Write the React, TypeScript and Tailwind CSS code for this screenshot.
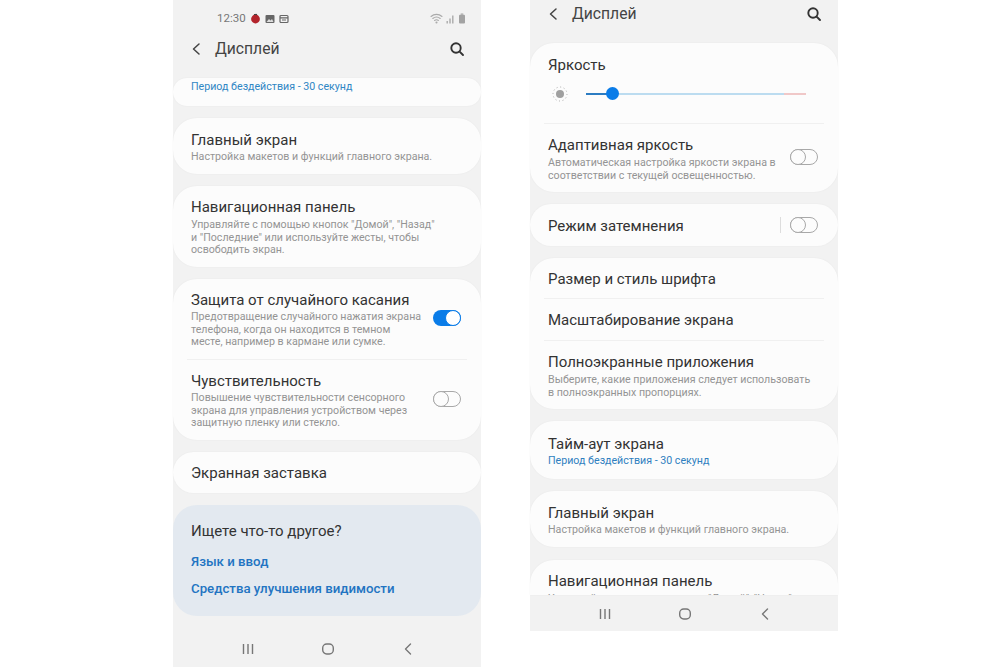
import React from "react";

const Font = { fontFamily: '"Roboto", "Noto Sans", sans-serif' };

function Toggle({ on = false }: { on?: boolean }) {
  return on ? (
    <div className="relative h-[16px] w-[28px] shrink-0 rounded-full bg-[#0a7ce8]">
      <div className="absolute right-0 top-0 h-[16px] w-[16px] rounded-full border-[1.5px] border-[#0a7ce8] bg-white" />
    </div>
  ) : (
    <div className="relative h-[16px] w-[28px] shrink-0 rounded-full border border-[#a8a8a8] bg-[#fcfcfc]">
      <div className="absolute left-[-1px] top-[-1px] h-[16px] w-[16px] rounded-full border border-[#a8a8a8] bg-[#fcfcfc]" />
    </div>
  );
}

function Card({ children, className = "" }: { children: React.ReactNode; className?: string }) {
  return <div className={`shrink-0 overflow-hidden rounded-[24px] bg-[#fcfcfc] shadow-[0_0_2px_rgba(0,0,0,0.05)] ${className}`}>{children}</div>;
}

function Title({ children }: { children: React.ReactNode }) {
  return <div className="pt-[1px] text-[15px] leading-[20px] text-[#333333]">{children}</div>;
}

function Sub({ children, className = "" }: { children: React.ReactNode; className?: string }) {
  return <div className={`mt-[1px] text-[10.65px] leading-[12.5px] text-[#949494] ${className}`}>{children}</div>;
}

function Divider() {
  return <div className="mx-[14px] h-px bg-[#f0f0f0]" />;
}

function Back({ size = 16 }: { size?: number }) {
  return (
    <svg width={size} height={size} viewBox="0 0 16 16" fill="none" stroke="#444" strokeWidth="1.5" strokeLinecap="round" strokeLinejoin="round">
      <path d="M11 3 5.5 8l5.5 5" />
    </svg>
  );
}

function Search() {
  return (
    <svg width="16" height="16" viewBox="0 0 16 16" fill="none" stroke="#333" strokeWidth="1.9" strokeLinecap="round">
      <circle cx="7" cy="7" r="4.7" />
      <path d="m10.6 10.6 3.4 3.4" />
    </svg>
  );
}

function Header({ className = "" }: { className?: string }) {
  return (
    <div className={`flex items-center justify-between pl-[15px] pr-[16px] ${className}`}>
      <div className="flex items-center gap-[11px]">
        <Back />
        <span className="text-[15.7px] leading-[20px] text-[#444444]">Дисплей</span>
      </div>
      <Search />
    </div>
  );
}

function NavBar({ className = "" }: { className?: string }) {
  return (
    <div className={`flex items-center justify-between pl-[68px] pr-[66px] ${className}`}>
      <svg width="14" height="14" viewBox="0 0 14 14" fill="none" stroke="#777" strokeWidth="1.4">
        <path d="M2.5 2v10M7 2v10M11.5 2v10" />
      </svg>
      <svg width="14" height="14" viewBox="0 0 14 14" fill="none" stroke="#777" strokeWidth="1.4">
        <rect x="1.7" y="2" width="10.6" height="10" rx="4" />
      </svg>
      <svg width="14" height="14" viewBox="0 0 14 14" fill="none" stroke="#777" strokeWidth="1.4" strokeLinecap="round" strokeLinejoin="round">
        <path d="M9.5 2 4.5 7l5 5" />
      </svg>
    </div>
  );
}

function StatusBar() {
  return (
    <div className="flex h-[36px] items-center justify-between pl-[44px] pr-[15px] pt-[1px]">
      <div className="flex items-center gap-[4px]">
        <span className="text-[11.5px] leading-none text-[#777777]">12:30</span>
        <svg width="11" height="11" viewBox="0 0 11 11"><circle cx="5.5" cy="6" r="4.4" fill="#b3242c" /><path d="M4 1.5h3" stroke="#444" strokeWidth="1.2" /></svg>
        <svg width="10" height="10" viewBox="0 0 10 10"><rect x="0.5" y="1" width="9" height="8" rx="1" fill="#666" /><path d="m1.5 8 2.5-3 1.5 1.5L7 5l1.5 3z" fill="#ddd" /></svg>
        <svg width="10" height="10" viewBox="0 0 10 10" fill="none" stroke="#666" strokeWidth="1.2"><rect x="1" y="1.5" width="8" height="7" rx="1" /><path d="M1 3.8h8M3 6h4" /></svg>
      </div>
      <div className="flex items-center gap-[3px]">
        <svg width="13" height="11" viewBox="0 0 13 11" fill="none" stroke="#aaa" strokeWidth="1.1" strokeLinecap="round"><path d="M1 3.5c3.2-2.8 7.8-2.8 11 0M2.8 5.5c2.2-1.8 5.2-1.8 7.4 0M4.6 7.5c1.1-.9 2.7-.9 3.8 0" /><circle cx="6.5" cy="9.5" r=".5" fill="#aaa" /></svg>
        <svg width="9" height="10" viewBox="0 0 9 10" fill="#aaa"><rect x="0.5" y="7" width="1.4" height="2.5" /><rect x="3.3" y="4.5" width="1.4" height="5" /><rect x="6.1" y="1.5" width="1.4" height="8" /></svg>
        <svg width="8" height="11" viewBox="0 0 8 11" fill="#a3a3a3"><rect x="2.7" y="0.5" width="2.6" height="1.2" /><rect x="1" y="1.7" width="6" height="8.8" rx="1" /></svg>
      </div>
    </div>
  );
}

function Left() {
  return (
    <div className="flex h-[667px] w-[308px] shrink-0 flex-col bg-[#f2f2f2]">
      <StatusBar />
      <Header className="mt-[3px] h-[20px]" />
      <div className="mt-[19px] flex flex-col gap-[12px]">
        <Card className="h-[28px] px-[18px]">
          <div className="text-[10.65px] leading-[18px] text-[#2f86c4]">Период бездействия - 30 секунд</div>
        </Card>
        <Card className="h-[56px] px-[18px] pt-[11px]">
          <Title>Главный экран</Title>
          <Sub>Настройка макетов и функций главного экрана.</Sub>
        </Card>
        <Card className="h-[81px] px-[18px] pt-[10px]">
          <Title>Навигационная панель</Title>
          <Sub className="mt-[2px]">Управляйте с помощью кнопок "Домой", "Назад"<br />и "Последние" или используйте жесты, чтобы<br />освободить экран.</Sub>
        </Card>
        <Card className="h-[161px]">
          <div className="flex h-[80px] items-center justify-between pl-[18px] pr-[20px]">
            <div>
              <Title>Защита от случайного касания</Title>
              <Sub>Предотвращение случайного нажатия экрана<br />телефона, когда он находится в темном<br />месте, например в кармане или сумке.</Sub>
            </div>
            <div className="mb-[2px]"><Toggle on /></div>
          </div>
          <Divider />
          <div className="flex h-[80px] items-center justify-between pl-[18px] pr-[20px]">
            <div>
              <Title>Чувствительность</Title>
              <Sub>Повышение чувствительности сенсорного<br />экрана для управления устройством через<br />защитную пленку или стекло.</Sub>
            </div>
            <div className="mb-[2px]"><Toggle /></div>
          </div>
        </Card>
        <Card className="flex h-[41px] items-center px-[18px]">
          <Title>Экранная заставка</Title>
        </Card>
        <div className="h-[111px] shrink-0 rounded-[24px] bg-[#e3e9f0] px-[18px] pt-[16px]">
          <div className="text-[15px] leading-[20px] text-[#333333]">Ищете что-то другое?</div>
          <div className="mt-[11px] text-[13.25px] font-medium leading-[20px] text-[#2274c2]">Язык и ввод</div>
          <div className="mt-[7px] text-[13.25px] font-medium leading-[20px] text-[#2274c2]">Средства улучшения видимости</div>
        </div>
      </div>
      <NavBar className="mt-[23px] h-[20px]" />
    </div>
  );
}

function Right() {
  return (
    <div className="flex h-[631px] w-[308px] shrink-0 flex-col bg-[#f2f2f2]">
      <Header className="mt-[4px] h-[20px]" />
      <div className="mt-[19px] flex flex-col gap-[12px]">
        <Card className="h-[149px]">
          <div className="h-[80px] px-[18px] pt-[11px]">
            <Title>Яркость</Title>
            <div className="mt-[11px] flex h-[16px] items-center">
              <svg width="16" height="16" viewBox="0 0 16 16" className="ml-[4px]">
                <circle cx="8" cy="8" r="4" fill="#a0a0a0" />
                <circle cx="8" cy="8" r="7" fill="none" stroke="#aaa" strokeWidth="1" strokeDasharray="1 2.66" />
              </svg>
              <div className="relative ml-[18px] flex h-[2px] w-[220px] bg-[#bcdcf0]">
                <div className="h-full w-[26px] bg-[#2c7cc2]" />
                <div className="ml-auto h-full w-[22px] bg-[#f0c8c8]" />
                <div className="absolute left-[20px] top-[-6px] h-[13px] w-[13px] rounded-full bg-[#0a7ce8]" />
              </div>
            </div>
          </div>
          <Divider />
          <div className="flex h-[68px] justify-between pl-[18px] pr-[20px] pt-[10px]">
            <div>
              <Title>Адаптивная яркость</Title>
              <Sub className="mt-[2px]">Автоматическая настройка яркости экрана в<br />соответствии с текущей освещенностью.</Sub>
            </div>
            <div className="mt-[15px]"><Toggle /></div>
          </div>
        </Card>
        <Card className="flex h-[42px] items-center justify-between pl-[18px] pr-[20px]">
          <Title>Режим затемнения</Title>
          <div className="flex items-center gap-[9px]">
            <div className="h-[16px] w-px bg-[#dddddd]" />
            <Toggle />
          </div>
        </Card>
        <Card className="h-[151px]">
          <div className="flex h-[40px] items-center px-[18px]"><Title>Размер и стиль шрифта</Title></div>
          <Divider />
          <div className="flex h-[41px] items-center px-[18px]"><Title>Масштабирование экрана</Title></div>
          <Divider />
          <div className="px-[18px] pt-[10px]">
            <Title>Полноэкранные приложения</Title>
            <Sub className="mt-[2px]">Выберите, какие приложения следует использовать<br />в полноэкранных пропорциях.</Sub>
          </div>
        </Card>
        <Card className="h-[58px] px-[18px] pt-[12px]">
          <Title>Тайм-аут экрана</Title>
          <div className="mt-[1px] text-[10.65px] leading-[12.5px] text-[#2f7fc0]">Период бездействия - 30 секунд</div>
        </Card>
        <Card className="h-[56px] px-[18px] pt-[11px]">
          <Title>Главный экран</Title>
          <Sub>Настройка макетов и функций главного экрана.</Sub>
        </Card>
        <Card className="mt-[1px] h-[35px] rounded-b-none px-[18px] pt-[10px]">
          <Title>Навигационная панель</Title>
          <Sub className="mt-[2px]">Управляйте с помощью кнопок "Домой", "Назад"</Sub>
        </Card>
      </div>
      <NavBar className="mt-[9px] h-[20px]" />
    </div>
  );
}

export default function App() {
  return (
    <div className="flex h-[667px] w-[1000px] items-start overflow-hidden bg-white pl-[173px]" style={Font}>
      <Left />
      <div className="w-[49px] shrink-0" />
      <Right />
    </div>
  );
}
